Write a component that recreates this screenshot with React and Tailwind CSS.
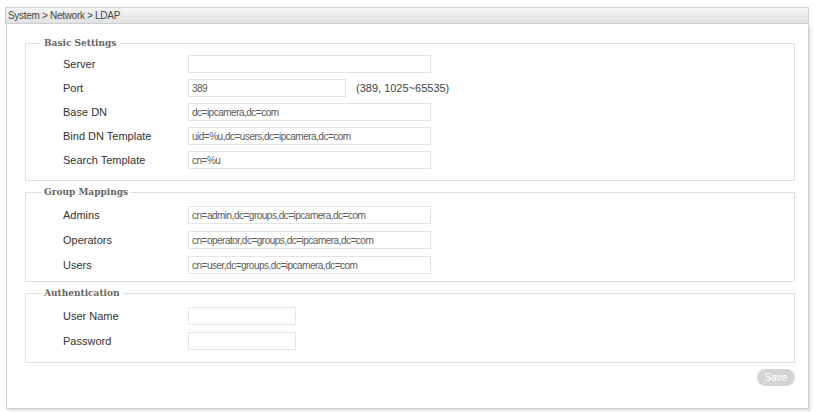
import React from "react";

const font = { fontFamily: '"Liberation Sans", Arial, sans-serif' };

function Row({ label, value, inputW = "w-[243px]", extra }) {
  return (
    <div className="flex items-center h-[24px]">
      <div className="w-[162px] shrink-0 pl-[37px] whitespace-nowrap text-[11px] text-[#333]">{label}</div>
      <div
        className={`${inputW} shrink-0 h-[18px] border border-[#e4e4e4] bg-white flex items-center px-[3px] text-[10px] tracking-[-0.5px] text-[#5a5a5a] whitespace-nowrap overflow-hidden`}
      >
        {value}
      </div>
      {extra && <div className="ml-[10px] text-[11px] text-[#444] whitespace-nowrap">{extra}</div>}
    </div>
  );
}

function Group({ title, children, className = "" }) {
  return (
    <fieldset className={`border border-[#dedede] ml-[18px] mr-[13px] ${className}`}>
      <legend className="ml-[15px] px-[3px] text-[9px] leading-[12px] font-bold text-[#666]" style={{ fontFamily: '"DejaVu Serif", "Liberation Serif", serif' }}>
        {title}
      </legend>
      {children}
    </fieldset>
  );
}

export default function App() {
  return (
    <div className="w-[820px] h-[412px] bg-white relative overflow-hidden" style={font}>
      <div className="pt-[7px] pl-[5px] pr-[11px]">
        <div className="h-[17px] border border-[#d0d0d0] bg-gradient-to-b from-[#f4f4f4] to-[#e2e2e2] flex items-center pl-[2px] text-[10px] tracking-[-0.3px] text-[#444]">
          System &gt; Network &gt; LDAP
        </div>
        <div className="ml-[1px] h-[385px] border border-t-0 border-[#cfcfcf] shadow-[2px_2px_3px_rgba(0,0,0,0.12)] flex flex-col pt-[13px]">
          <Group title="Basic Settings">
            <div className="pt-[3px] pb-[8px]">
              <Row label="Server" value="" />
              <Row label="Port" value="389" inputW="w-[158px]" extra="(389, 1025~65535)" />
              <Row label="Base DN" value="dc=ipcamera,dc=com" />
              <Row label="Bind DN Template" value="uid=%u,dc=users,dc=ipcamera,dc=com" />
              <Row label="Search Template" value="cn=%u" />
            </div>
          </Group>
          <Group title="Group Mappings" className="mt-[5px]">
            <div className="pt-[5px] pb-[4px] flex flex-col gap-[1px]">
              <Row label="Admins" value="cn=admin,dc=groups,dc=ipcamera,dc=com" />
              <Row label="Operators" value="cn=operator,dc=groups,dc=ipcamera,dc=com" />
              <Row label="Users" value="cn=user,dc=groups,dc=ipcamera,dc=com" />
            </div>
          </Group>
          <Group title="Authentication" className="mt-[5px]">
            <div className="pt-[5px] pb-[9px] flex flex-col gap-[1px]">
              <Row label="User Name" value="" inputW="w-[108px]" />
              <Row label="Password" value="" inputW="w-[108px]" />
            </div>
          </Group>
          <div className="flex justify-end pr-[13px] mt-[6px]">
            <div className="w-[38px] h-[17px] rounded-full bg-[#d4d4d4] text-white text-[10px] flex items-center justify-center">
              Save
            </div>
          </div>
        </div>
      </div>
    </div>
  );
}
